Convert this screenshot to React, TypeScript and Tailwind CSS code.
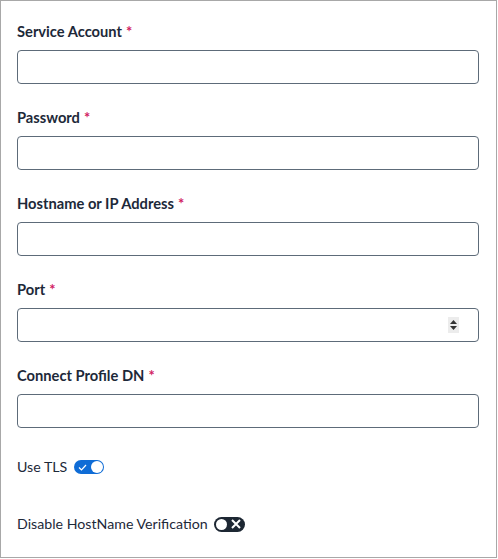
import React from "react";

const Label = ({ text }: { text: string }) => (
  <div className="h-[20px] leading-[20px] text-[14.7px] font-bold text-[#1d2939] mb-[9px]">
    {text}
    <span className="text-[#d1205f] ml-[4px] font-bold">*</span>
  </div>
);

const Field = ({ label, number }: { label: string; number?: boolean }) => (
  <div className="mb-[23px]">
    <Label text={label} />
    <div className="h-[34px] w-[462px] border border-[#5d6b79] rounded-[4px] bg-white flex items-center justify-end pr-[19px]">
      {number && (
        <div className="w-[11px] h-[16px] bg-[#ececec] flex flex-col items-center justify-center gap-[2px]">
          <svg width="7" height="4" viewBox="0 0 7 4">
            <path d="M0 4 L3.5 0 L7 4 Z" fill="#333" />
          </svg>
          <svg width="7" height="4" viewBox="0 0 7 4">
            <path d="M0 0 L7 0 L3.5 4 Z" fill="#333" />
          </svg>
        </div>
      )}
    </div>
  </div>
);

export default function App() {
  return (
    <div
      className="w-[497px] h-[558px] border border-[#a8a8a8] bg-white px-4 pt-[20px]"
      style={{ fontFamily: "Lato, 'Liberation Sans', sans-serif" }}
    >
      <Field label="Service Account" />
      <Field label="Password" />
      <Field label="Hostname or IP Address" />
      <Field label="Port" number />
      <Field label="Connect Profile DN" />
      <div className="mt-[29px] h-[20px] flex items-center text-[14.2px] text-[#1d2939]">
        <span>Use TLS</span>
        <div className="ml-[7px] w-[30px] h-[14px] rounded-full bg-[#0f6cd6] flex items-center justify-between pl-[4px] pr-[1px]">
          <svg width="9" height="7" viewBox="0 0 9 7">
            <path d="M1 3.5 L3.5 6 L8 1" stroke="white" strokeWidth="1.2" fill="none" />
          </svg>
          <div className="w-[12px] h-[12px] rounded-full bg-white" />
        </div>
      </div>
      <div className="mt-[37px] h-[20px] flex items-center text-[14.2px] text-[#1d2939]">
        <span>Disable HostName Verification</span>
        <div className="ml-[6px] w-[31px] h-[15px] rounded-full bg-[#1d2733] flex items-center justify-between pl-[2px] pr-[4px]">
          <div className="w-[11px] h-[11px] rounded-full bg-white" />
          <svg width="10" height="10" viewBox="0 0 10 10">
            <path d="M1 1 L9 9 M9 1 L1 9" stroke="white" strokeWidth="2" fill="none" />
          </svg>
        </div>
      </div>
    </div>
  );
}
